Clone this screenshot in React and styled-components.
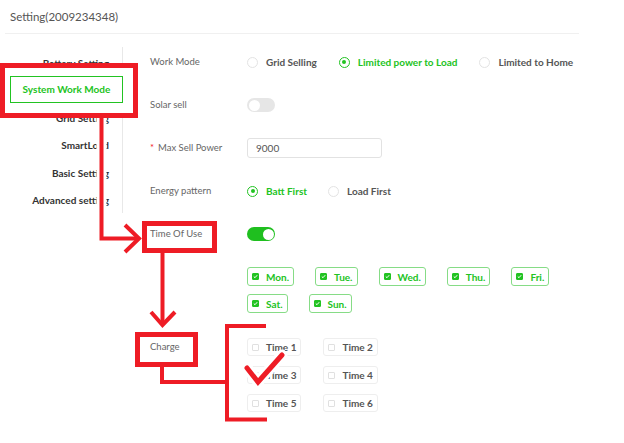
import React from 'react';
import styled, { createGlobalStyle } from 'styled-components';

const GlobalStyle = createGlobalStyle`
  html, body {
    margin: 0;
    padding: 0;
    background: #fff;
  }
  body {
    font-family: Lato, "Open Sans", Arial, sans-serif;
    font-size: 10px;
    color: #555;
  }
`;

const green = '#22c322';
const red = '#ee1c25';

const Page = styled.div`
  position: relative;
  width: 624px;
  height: 443px;
  overflow: hidden;
`;

const Header = styled.div`
  width: 569px;
  height: 33px;
  margin-left: 5px;
  padding-left: 5px;
  border-bottom: 1px solid #f0f0f0;
  display: flex;
  align-items: center;
  font-size: 11.5px;
  color: #555;
`;

const Body = styled.div`
  display: flex;
  align-items: flex-start;
`;

const Sidebar = styled.ul`
  list-style: none;
  margin: 13px 0 0;
  padding: 2px 0 0;
  width: 123px;
  height: 166px;
  box-sizing: border-box;
  border-right: 1px solid #e8e8e8;
`;

const NavItem = styled.li`
  position: relative;
  height: 27.5px;
  display: flex;
  align-items: center;
  justify-content: flex-end;
  padding-right: 13px;
  font-weight: 700;
  color: ${(p) => (p.$active ? green : '#333')};
  white-space: nowrap;
`;

const ActiveBox = styled.span`
  position: absolute;
  z-index: 3;
  left: 10px;
  top: -1px;
  width: 113px;
  height: 27px;
  box-sizing: border-box;
  border: 1.5px solid ${green};
  background: #fff;
  display: flex;
  align-items: center;
  justify-content: center;
  font-weight: 700;
`;

const Content = styled.div`
  padding: 18px 0 0 27px;
  display: flex;
  flex-direction: column;
`;

const FormRow = styled.div`
  display: flex;
  align-items: ${(p) => (p.$top ? 'flex-start' : 'center')};
  min-height: 20px;
  margin-bottom: ${(p) => p.$gap ?? 23}px;
`;

const Label = styled.div`
  width: 97px;
  flex-shrink: 0;
  color: #666;
  font-size: 9.5px;
  line-height: 20px;
  height: ${(p) => (p.$top ? '18px' : 'auto')};
  display: flex;
  align-items: center;
`;

const Star = styled.span`
  color: #f5222d;
  margin-right: 4px;
`;

const Group = styled.div`
  display: flex;
  align-items: center;
  gap: ${(p) => p.$gap ?? 22}px;
`;

const RadioItem = styled.label`
  display: flex;
  align-items: center;
  gap: 8px;
  font-weight: 700;
  color: ${(p) => (p.$checked ? green : '#555')};
  white-space: nowrap;
`;

const RadioDot = styled.span`
  width: 11px;
  height: 11px;
  box-sizing: border-box;
  border-radius: 50%;
  border: 1px solid ${(p) => (p.$checked ? green : '#e3e3e3')};
  display: flex;
  align-items: center;
  justify-content: center;

  &::after {
    content: '';
    width: 4px;
    height: 4px;
    border-radius: 50%;
    background: ${(p) => (p.$checked ? green : 'transparent')};
  }
`;

const Switch = styled.span`
  width: 28px;
  height: 14px;
  border-radius: 7px;
  background: ${(p) => (p.$on ? '#1fbf1f' : '#e6e6e6')};
  display: flex;
  align-items: center;
  justify-content: ${(p) => (p.$on ? 'flex-end' : 'flex-start')};
  padding: 0 1.5px;
  box-sizing: border-box;

  &::after {
    content: '';
    width: 11px;
    height: 11px;
    border-radius: 50%;
    background: #fff;
  }
`;

const Input = styled.div`
  width: 135px;
  height: 20px;
  box-sizing: border-box;
  border: 1px solid #e2e2e2;
  border-radius: 3px;
  padding-left: 8px;
  display: flex;
  align-items: center;
  color: #555;
`;

const ChipGrid = styled.div`
  display: flex;
  flex-direction: column;
  gap: ${(p) => p.$rowGap}px;
`;

const ChipRow = styled.div`
  display: flex;
  gap: ${(p) => p.$gap}px;
`;

const Chip = styled.div`
  height: ${(p) => p.$h}px;
  box-sizing: border-box;
  display: flex;
  align-items: center;
  gap: 7px;
  padding: 0 4px 0 4px;
  min-width: ${(p) => p.$minW ?? 0}px;
  border: ${(p) => (p.$on ? `1.5px solid #86dc86` : '1px solid #eeeeee')};
  border-radius: 3px;
  font-weight: 700;
  color: ${(p) => (p.$on ? green : '#555')};
  white-space: nowrap;
`;

const Box = styled.span`
  width: 7px;
  height: 7px;
  box-sizing: border-box;
  border-radius: 1px;
  background: ${(p) => (p.$on ? green : '#fff')};
  border: 1px solid ${(p) => (p.$on ? green : '#e0e0e0')};
  display: flex;
  align-items: center;
  justify-content: center;
  flex-shrink: 0;
`;

const Marks = styled.svg`
  position: absolute;
  left: 0;
  top: 0;
  z-index: 2;
  pointer-events: none;
`;

const navItems = ['Battery Setting', 'System Work Mode', 'Grid Setting', 'SmartLoad', 'Basic Setting', 'Advanced setting'];
const dayRows = [['Mon.', 'Tue.', 'Wed.', 'Thu.', 'Fri.'], ['Sat.', 'Sun.']];
const timeRows = [['Time 1', 'Time 2'], ['Time 3', 'Time 4'], ['Time 5', 'Time 6']];

const Tick = () => (
  <svg width="5" height="5" viewBox="0 0 5 5">
    <path d="M0.8 2.6 L2 3.7 L4.2 1.2" fill="none" stroke="#fff" strokeWidth="1" />
  </svg>
);

const Radio = ({ checked, children }) => (
  <RadioItem $checked={checked}>
    <RadioDot $checked={checked} />
    {children}
  </RadioItem>
);

const Annotations = () => (
  <Marks width="624" height="443" viewBox="0 0 624 443">
    <g fill="none" strokeLinejoin="miter" strokeLinecap="butt">
      <rect x="2.5" y="65.5" width="133" height="50" fill="#fff" stroke={red} strokeWidth="5" />
      <path d="M101.5 118 V238.5 H137" stroke="#fff" strokeWidth="10" />
      <path d="M101.5 118 V238.5 H137" stroke={red} strokeWidth="4" />
      <path d="M125 225 L139 238.5 L125 252" stroke={red} strokeWidth="4" />
      <rect x="144.5" y="223.5" width="70" height="27" stroke={red} strokeWidth="5" />
      <path d="M162.5 253 V324" stroke={red} strokeWidth="4" />
      <path d="M151 312 L162.5 325 L175 312" stroke={red} strokeWidth="4" />
      <rect x="137.5" y="334.5" width="58" height="30" stroke={red} strokeWidth="5" />
      <path d="M162 367 V382 H227" stroke={red} strokeWidth="4" />
      <path d="M266 326 H227 V419.5 H267" stroke={red} strokeWidth="4" />
      <path d="M247 368 L258 382 L282 355" stroke="#fff" strokeWidth="11" strokeLinecap="round" />
      <path d="M247 368 L258 382 L282 355" stroke={red} strokeWidth="5" strokeLinecap="round" />
    </g>
  </Marks>
);

const App = () => (
  <Page>
    <GlobalStyle />
    <Header>Setting(2009234348)</Header>
    <Body>
      <Sidebar>
        {navItems.map((item) => (
          <NavItem key={item} $active={item === 'System Work Mode'}>
            {item === 'System Work Mode' ? <ActiveBox>{item}</ActiveBox> : item}
          </NavItem>
        ))}
      </Sidebar>
      <Content>
        <FormRow>
          <Label>Work Mode</Label>
          <Group>
            <Radio>Grid Selling</Radio>
            <Radio checked>Limited power to Load</Radio>
            <Radio>Limited to Home</Radio>
          </Group>
        </FormRow>
        <FormRow>
          <Label>Solar sell</Label>
          <Switch />
        </FormRow>
        <FormRow>
          <Label>
            <Star>*</Star>Max Sell Power
          </Label>
          <Input>9000</Input>
        </FormRow>
        <FormRow>
          <Label>Energy pattern</Label>
          <Group $gap={21}>
            <Radio checked>Batt First</Radio>
            <Radio>Load First</Radio>
          </Group>
        </FormRow>
        <FormRow>
          <Label>Time Of Use</Label>
          <Switch $on />
        </FormRow>
        <FormRow $gap={25}>
          <Label />
          <ChipGrid $rowGap={8}>
            {dayRows.map((row, i) => (
              <ChipRow key={i} $gap={21}>
                {row.map((d) => (
                  <Chip key={d} $on $h={19}>
                    <Box $on>
                      <Tick />
                    </Box>
                    {d}
                  </Chip>
                ))}
              </ChipRow>
            ))}
          </ChipGrid>
        </FormRow>
        <FormRow $top $gap={0}>
          <Label $top>Charge</Label>
          <ChipGrid $rowGap={10}>
            {timeRows.map((row, i) => (
              <ChipRow key={i} $gap={22}>
                {row.map((t) => (
                  <Chip key={t} $h={18} $minW={53}>
                    <Box />
                    {t}
                  </Chip>
                ))}
              </ChipRow>
            ))}
          </ChipGrid>
        </FormRow>
      </Content>
    </Body>
    <Annotations />
  </Page>
);

export default App;
